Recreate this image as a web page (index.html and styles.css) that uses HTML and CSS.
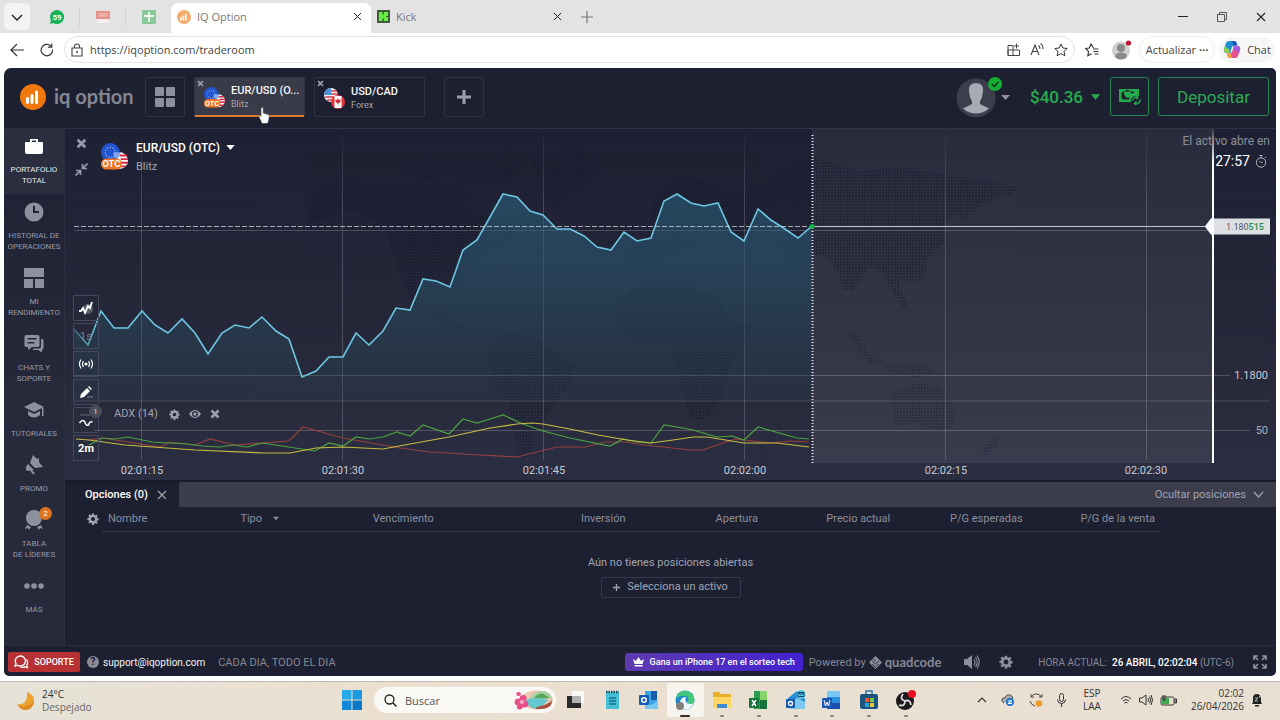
FILE: index.html
```html
<!DOCTYPE html>
<html lang="es">
<head>
<meta charset="utf-8">
<title>IQ Option</title>
<link rel="stylesheet" href="styles.css">
</head>
<body>
<svg class="defs" aria-hidden="true">
  <symbol id="gear" viewBox="0 0 20 20"><path fill-rule="evenodd" fill="currentColor" d="M8.4 1h3.2l.4 2.5 1.5.6 2.1-1.5 2.2 2.2-1.5 2.1.6 1.5 2.5.4v3.2l-2.5.4-.6 1.5 1.5 2.1-2.2 2.2-2.1-1.5-1.5.6-.4 2.5H8.4L8 16.8l-1.500-.6-2.100 1.500-2.200-2.200 1.500-2.100-.6-1.500L.6 11.500V8.400l2.500-.4.6-1.500-1.500-2.100 2.200-2.200 2.100 1.500L8 3.200zM10 6.600a3.400 3.400 0 1 0 0 6.800 3.400 3.400 0 0 0 0-6.800z"/></symbol>
  <symbol id="cross" viewBox="0 0 10 10"><path d="M1.500 1.500l7 7m0-7l-7 7" stroke="currentColor" stroke-width="2.600" fill="none"/></symbol>
  <symbol id="thin-cross" viewBox="0 0 10 10"><path d="M1 1l8 8m0-8l-8 8" stroke="currentColor" fill="none" stroke-width="1.100"/></symbol>
  <symbol id="caret" viewBox="0 0 10 6"><path d="M0 0h10L5 6z" fill="currentColor"/></symbol>
  <symbol id="bars" viewBox="0 0 26 26"><circle cx="13" cy="13" r="13" fill="#f0780d"/><path d="M7.500 18.500v-4M12 18.500v-7M16.500 18.500V8" stroke="#fff" stroke-width="3" stroke-linecap="round"/></symbol>
  <symbol id="pair-otc" viewBox="0 0 26 26">
    <circle cx="18" cy="17" r="8" fill="#f4f1f5"/><path d="M18 12h7M19 15.500h7M19 19h7M18 22.500h6" stroke="#d62d48" stroke-width="1.800"/>
    <circle cx="9" cy="9" r="9" fill="#2354cf"/><circle cx="9" cy="9" r="4.800" fill="none" stroke="#a9bce9" stroke-width="1.300" stroke-dasharray="1 1.700"/><path d="M12 9h6a9 9 0 0 1-2 6l-4-1z" fill="#7fa6ed"/>
    <rect y="15" width="20" height="10.500" rx="5" fill="#ee7424"/><text x="10" y="23.300" text-anchor="middle" class="otc">OTC</text>
  </symbol>
</svg>

<header class="tabs">
  <button class="tab-menu" aria-label="Lista de pestañas"><svg width="12" height="12" viewBox="0 0 12 12"><path d="M1 4l5 5 5-5" fill="none" stroke="#222" stroke-width="1.400"/></svg></button>
  <button class="pin" aria-label="WhatsApp"><svg width="14" height="14" viewBox="0 0 14 14"><path d="M7 0a7 7 0 1 1-3.500 13L0 14l1-3.500A7 7 0 0 1 7 0z" fill="#15b257"/><text x="7" y="10" text-anchor="middle" class="badge-text">59</text></svg></button>
  <button class="pin" aria-label="Página fijada"><svg width="14" height="14" viewBox="0 0 14 14"><path d="M0 1h14v8H0z" fill="#e5938a"/><path d="M2 4h10M2 6h10" stroke="#f4c5c0"/><path d="M1 9h12v4H1z" fill="#f4eeee"/></svg></button>
  <button class="pin last" aria-label="Hoja de cálculo"><svg width="14" height="14" viewBox="0 0 14 14"><rect width="14" height="14" rx="1" fill="#8ac99a"/><path d="M7 2v10M2 6h10" stroke="#f0faf2" stroke-width="1.800"/></svg></button>
  <div class="tab active"><svg class="faded" width="14" height="14"><use href="#bars"/></svg><span>IQ Option</span><button aria-label="Cerrar pestaña"><svg width="9" height="9"><use href="#thin-cross"/></svg></button></div>
  <div class="tab"><svg width="13" height="13" viewBox="0 0 13 13"><path d="M0 0h13v13H0z" fill="#3f5c3a"/><path d="M2 2h3.500v2.500h1.500V2H11v4H9v1h2v4H7V8.500H5.500V11H2z" fill="#65ed43"/></svg><span>Kick</span><button aria-label="Cerrar pestaña"><svg width="9" height="9"><use href="#thin-cross"/></svg></button></div>
  <button class="new-tab" aria-label="Nueva pestaña"><svg width="12" height="12" viewBox="0 0 12 12"><path d="M6 0v12M0 6h12" stroke="#777" stroke-width="1.200"/></svg></button>
  <div class="window-buttons">
    <button aria-label="Minimizar"><svg width="10" height="10" viewBox="0 0 10 10"><path d="M0 4.500h10" stroke="#222"/></svg></button>
    <button aria-label="Restaurar"><svg width="10" height="10" viewBox="0 0 10 10"><path d="M.5 2.500h7v7h-7zM2.500 2V.5h7v7H8" fill="none" stroke="#555"/></svg></button>
    <button aria-label="Cerrar"><svg width="10" height="10"><use href="#thin-cross"/></svg></button>
  </div>
</header>

<div class="toolbar">
  <button aria-label="Atrás"><svg width="14" height="14" viewBox="0 0 14 14"><path d="M14 7H1m6-6L1 7l6 6" fill="none" stroke="#333" stroke-width="1.200"/></svg></button>
  <button aria-label="Actualizar"><svg width="14" height="14" viewBox="0 0 14 14"><path d="M12.500 6.500A5.700 5.700 0 1 1 10.800 3M11.800.5v3.700H8" fill="none" stroke="#333" stroke-width="1.200"/></svg></button>
  <form class="address">
    <svg width="12" height="14" viewBox="0 0 12 14"><path d="M1 5h10v8H1zM3.500 5V3.500a2.500 2.500 0 0 1 5 0V5" fill="none" stroke="#444" stroke-width="1.100"/><circle cx="6" cy="9" r="1" fill="#444"/></svg>
    <input aria-label="Dirección" value="https://iqoption.com/traderoom">
    <svg width="13" height="13" viewBox="0 0 13 13"><path d="M1 2.500h5v10H1zM6 7h6.500v5.500H1V7h5M9.500.5v5M7 3h5" fill="none" stroke="#444"/></svg>
    <svg width="14" height="13" viewBox="0 0 14 13"><path d="M1 12L5 2l4 10M2.500 8.500h5M8.500 2.500q1.800 1.500 1.300 3.500M10.500.5Q13.500 2.500 13 6" fill="none" stroke="#444" stroke-width="1.100"/></svg>
    <svg width="14" height="14" viewBox="0 0 14 14"><path d="M7 1l1.900 4 4.300.5-3.200 3 .9 4.300L7 10.600l-3.900 2.200.9-4.300-3.200-3L5.100 5z" fill="none" stroke="#333"/></svg>
  </form>
  <button class="fav" aria-label="Favoritos"><svg width="14" height="14" viewBox="0 0 14 14"><path d="M8.500 5L6 1 4.300 5 .7 5.500l2.800 3-.7 4.300 3.700-2.100M8 6h5.500M8.500 8.500h5M9.500 11h4" fill="none" stroke="#333" stroke-width="1.100"/></svg></button>
  <button class="profile" aria-label="Perfil"><svg width="20" height="20" viewBox="0 0 20 20"><circle cx="9" cy="10.500" r="9" fill="#cfcfcf"/><circle cx="9" cy="8" r="4" fill="#8a8a8a"/><ellipse cx="9" cy="16" rx="6" ry="3.500" fill="#8a8a8a"/><circle cx="16.500" cy="3" r="2.600" fill="#bc1431"/></svg></button>
  <button class="update">Actualizar&nbsp; <b>···</b></button>
  <button class="copilot"><svg width="18" height="17" viewBox="0 0 18 17"><path d="M6 0h5q2 0 2.600 2l.8 2.500h-4L8 12H4Q0 12 1 8l2-6q.7-2 3-2z" fill="#1f91cf"/><path d="M11 0q2 0 2.600 2l.8 2.500h-4L9 0z" fill="#2350b8"/><path d="M1 8l1-3 5 4-1 3H4Q0 12 1 8z" fill="#8ccb52"/><path d="M12 17H7q-2 0-2.600-2l-.8-2.500h4L10 5h4q4 0 3 4l-2 6q-.7 2-3 2z" fill="#e5528b"/><path d="M9 17H7q-2 0-2.600-2L3.600 12.500h4z" fill="#f3a33b"/><path d="M10 5h4q4 0 3 4l-1 3-6-4z" fill="#a95cdb"/><path d="M9 5.500L7.500 11.500h1.500L10.500 5.500z" fill="#f6f6f6"/></svg>Chat</button>
</div>

<main class="app">
  <header class="app-head">
    <div class="logo"><svg width="26" height="26"><use href="#bars"/></svg><span>iq option</span></div>
    <button class="square grid-btn" aria-label="Diseño"><svg width="20" height="20" viewBox="0 0 20 20" fill="#8c8f9f"><rect width="9" height="9" rx="1"/><rect x="11" width="9" height="9" rx="1"/><rect y="11" width="9" height="9" rx="1"/><rect x="11" y="11" width="9" height="9" rx="1"/></svg></button>
    <button class="asset selected"><svg class="x" width="7" height="7"><use href="#cross"/></svg><svg class="flag" width="21" height="21"><use href="#pair-otc"/></svg><span class="names"><b>EUR/USD (O...</b><small>Blitz</small></span>
      <svg class="pointer" width="12" height="17" viewBox="0 0 12 17"><path d="M3 1q1.500-1.500 2.300.5V6l5 1.500q1.500.5 1 2.500l-1 5-1 1.500H4L1 10q-.8-1.800.5-2L3 9.500z" fill="#fff" stroke="#333" stroke-width=".6"/></svg></button>
    <button class="asset"><svg class="x" width="7" height="7"><use href="#cross"/></svg><svg class="flag" width="21" height="21" viewBox="0 0 21 21"><circle cx="7" cy="7" r="7" fill="#f2f0f3"/><path d="M5 3h8M6 6h8M1 9h12M3 12h8" stroke="#d23c50" stroke-width="1.500"/><path d="M0 7a7 7 0 0 1 7-7v7z" fill="#4b91da"/><circle cx="14" cy="14" r="7" fill="#e3343c"/><path d="M10.500 8h7v12h-7z" fill="#fff"/><path d="M14 10l1 2 2-.5-1 3-1.500.5v1.500h-1V15L12 14.500l-1-3 2 .5z" fill="#d92934"/></svg><span class="names"><b>USD/CAD</b><small>Forex</small></span></button>
    <button class="square add" aria-label="Añadir activo"><svg width="14" height="14" viewBox="0 0 14 14"><path d="M7 0v14M0 7h14" stroke="#9c9fae" stroke-width="3"/></svg></button>
    <button class="avatar" aria-label="Cuenta"><svg width="54" height="42" viewBox="0 0 54 42"><circle cx="20" cy="22" r="19.500" fill="#3c3e4d"/><path d="M20 7q8 0 7 9l-1 5q-1 3-2 4v3l9 4.500A19.500 19.500 0 0 1 7 32.500L16 28v-3q-1-1-2-4l-1-5q-1-9 7-9z" fill="#a8aab4"/><circle cx="39" cy="8" r="7" fill="#14ae36"/><path d="M36 8l2.300 2.300L42.500 6" fill="none" stroke="#10331c" stroke-width="1.600"/><path d="M45 19h9l-4.500 5z" fill="#8f929e"/></svg></button>
    <button class="balance">$40.36 <svg width="9" height="6"><use href="#caret"/></svg></button>
    <button class="green cash" aria-label="Recargar"><svg width="23" height="17" viewBox="0 0 23 17"><path fill-rule="evenodd" d="M1 1h20v7q-5-1-8 3v3H1zM5 3.500q0 1-1.500 1v6q1.500 0 1.500 1h6l1-3h-4a3.500 3.500 0 1 1 5-3l4-1q-1 0-1-1z" fill="#25aa4c"/><circle cx="10" cy="7" r="2.800" fill="#25aa4c"/><path d="M14.500 12.500a4 4 0 0 1 5-3.300M18 7.500l2 1.700-2 2M22 11.500a4 4 0 0 1-5 4.200M18.500 17l-2-1.500 2-2" fill="none" stroke="#25aa4c" stroke-width="1.400"/></svg></button>
    <button class="green deposit">Depositar</button>
  </header>

  <div class="app-body">
    <nav class="side">
      <a href="#" class="on"><svg viewBox="0 0 20 20"><path d="M6 3h8v3h-2V4.500H8V6H6zM2 6h16q1 0 1 1v9q0 2-2 2H3q-2 0-2-2V7q0-1 1-1z"/></svg>PORTAFOLIO<br>TOTAL</a>
      <a href="#"><svg viewBox="0 0 20 20"><path fill-rule="evenodd" d="M10 .5a9.500 9.500 0 1 1 0 19 9.500 9.500 0 0 1 0-19zM9 4v7h6V9h-4V4z"/></svg>HISTORIAL DE<br>OPERACIONES</a>
      <a href="#"><svg viewBox="0 0 20 20"><path d="M0 0h20v9H0zM0 11h9v9H0zM11 11h9v9h-9z"/></svg>MI<br>RENDIMIENTO</a>
      <a href="#"><svg viewBox="0 0 20 20"><path fill-rule="evenodd" d="M2 1h12q1.500 0 1.500 1.500v9q0 1.500-1.500 1.500H8l-4 3v-3H2Q.5 13 .5 11.500v-9Q.5 1 2 1zM3.500 4v1.500h9V4zm0 4v1.500h7V8zM17 5h1q1.500 0 1.500 1.500V14q0 1.500-1.500 1.500v3L14 16H9v-1.500h6q2 0 2-2z"/></svg>CHATS Y<br>SOPORTE</a>
      <a href="#"><svg viewBox="0 0 20 20"><path d="M10 2l10 5-10 5L0 7zM4 11l6 3 6-3v4q-6 5-12 0zM18 8h1.500v8H18z"/></svg>TUTORIALES</a>
      <a href="#"><svg viewBox="0 0 20 20"><path d="M9 0l4 4 2-1v4l4 5-8 1-5-5zM4 9l6 6-2 .5L11 18l-2 1.500-3-4-3 .5Q0 13 4 9z"/></svg>PROMO</a>
      <a href="#" class="leaders"><svg viewBox="0 0 20 20"><circle cx="10" cy="8" r="8"/><path d="M3 15l4 2-2 3-1-2-3 1zM17 15l-4 2 2 3 1-2 3 1z"/></svg><em>2</em>TABLA<br>DE LÍDERES</a>
      <a href="#"><svg viewBox="0 0 20 20"><circle cx="3" cy="10" r="2.800"/><circle cx="10" cy="10" r="2.800"/><circle cx="17" cy="10" r="2.800"/></svg>MÁS</a>
    </nav>

    <div class="work">
      <section class="chart">
        <svg class="plot" viewBox="65 129 1211 351" preserveAspectRatio="none">
          <defs>
            <linearGradient id="area" x1="0" y1="194" x2="0" y2="401" gradientUnits="userSpaceOnUse"><stop offset="0" stop-color="#2a6380" stop-opacity=".58"/><stop offset=".4" stop-color="#2b5a74" stop-opacity=".5"/><stop offset="1" stop-color="#284552" stop-opacity=".22"/></linearGradient>
            <linearGradient id="fade" x1="73" x2="112" y1="0" y2="0" gradientUnits="userSpaceOnUse"><stop stop-color="#5fb9d6" stop-opacity=".35"/><stop offset=".6" stop-color="#6cc6e2"/></linearGradient>
            <linearGradient id="ahead" x1="0" y1="0" x2="0" y2="1"><stop offset="0" stop-color="#fff" stop-opacity=".05"/><stop offset="1" stop-color="#fff" stop-opacity=".07"/></linearGradient>
            <linearGradient id="time-line" x1="0" y1="129" x2="0" y2="463" gradientUnits="userSpaceOnUse"><stop stop-color="#fff" stop-opacity=".1"/><stop offset=".1" stop-color="#fff"/></linearGradient>
            <linearGradient id="grid-line" x1="0" y1="135" x2="0" y2="200" gradientUnits="userSpaceOnUse"><stop stop-color="#fff" stop-opacity=".03"/><stop offset="1" stop-color="#fff" stop-opacity=".18"/></linearGradient>
            <pattern id="dots" width="3" height="3" patternUnits="userSpaceOnUse"><rect width="2" height="2" fill="#15172a"/></pattern>
          </defs>
          <rect x="812" y="129" width="401" height="334" fill="url(#ahead)"/>
          <g fill="url(#dots)" opacity=".42">
            <path d="M315 192l14-9 25-1 40 6 30-4 20 5 18-4 12 9-8 12 18 7 22 4 12 14-14 12-12 4-20 15-10 14-4 14-14-4-20 4-2 12 10 2 12 5 14 16 12 6-8 2-26-16-22-14-16-30-6-24-8-24-26-14-26 4-18 8-8-4z"/>
            <path d="M398 164l30-8 30 8 36-10 26 10-10 14-30 8-26-10-30 4-24-6z"/>
            <path d="M532 158l44-8 30 6-12 18-20 18-14 16-14-10-8-20z"/>
            <path d="M492 338l20-6 22 4 22 18 20 10-6 20-14 16-12 20-10 14-2 22-12 2-6-20-4-32-14-20-8-22z"/>
            <path d="M632 270l-4-18 14-12 10-14-2-20 14-16 22-14 26 8 10 10 26-6 16-6 18-14 34-10 40 12 52-2 46 8 50 8 18 5-22 8-20 8-14 16-10-8-10 8-2 22-16 16-6 20-14 4-10-8 2 16 8 12-4 6-14-22-8-16-12-4-18 24-8-2-12-28-18-8-12 16-22-24-22-4-26-6-20-8-12 12z"/>
            <path d="M632 288l22-8 34 4 28 14 20 26 18 2-12 22-12 18-6 28-16 24-16 2-10-26-4-28-10-22-30 2-22-18 0-20z"/>
            <g opacity=".6"><path d="M846 330l14 6 12 20 16 8 30 0 24 10-30 4-44-16z"/><path d="M890 396l16-10 16-4 18 6 16 20-4 20-16 4-18-10-22 4z"/><path d="M980 448l18-14 4 4-16 18z"/></g>
          </g>
          <g stroke="#fff" stroke-opacity=".18" fill="none">
            <path stroke="url(#grid-line)" stroke-opacity="1" d="M141.500 135v325M342.500 135v325M543.500 135v325M744.500 135v325M945.500 135v325M1146.500 135v325"/>
            <path d="M74 230.500h1140M74 375.500h1156M94 430.500h1156" stroke-opacity=".2"/><path d="M74 401h1196" stroke-opacity=".08" stroke-width="2"/>
          </g>
          <path d="M73 328l15 17 13-34 13 17h14l14-17 13 14 13 8 14-14 13 14 13 21 14-21 13-8 14 3 13-11 14 14 13 8 13 38 14-6 13-14h14l13-24 13 12 14-14 13-23 14 2 13-31 13 2 14 6 13-37 14-10 13-23 13-23 14 3 13 14 13 4 14 14h13l14 7 13 11 14 3 13-18 13 9 14-3 13-37 13-7 14 9 13 3 14-3 13 29 13 9 14-32 13 11 14 9 13 9 14-12V401H73z" fill="url(#area)"/>
          <path d="M73 328l15 17 13-34 13 17h14l14-17 13 14 13 8 14-14 13 14 13 21 14-21 13-8 14 3 13-11 14 14 13 8 13 38 14-6 13-14h14l13-24 13 12 14-14 13-23 14 2 13-31 13 2 14 6 13-37 14-10 13-23 13-23 14 3 13 14 13 4 14 14h13l14 7 13 11 14 3 13-18 13 9 14-3 13-37 13-7 14 9 13 3 14-3 13 29 13 9 14-32 13 11 14 9 13 9 14-12" fill="none" stroke="url(#fade)" stroke-width="1.600"/>
          <g fill="none" stroke-width="1.200">
            <path stroke="#94403f" d="M89 440l13-2 13 2 45 7 10-5 25 3 15-6 25 6 27-2 27-2 14-14 40 11 57 10 30 4 50 3 37 2 40-10h28l20-5h20l20 3 45 5h13l17-6 15-5 35 4 20-2 19 1"/>
            <path stroke="#4da13f" d="M89 445l13-7 13 1 13-2 24 5 18 1 17 1 15 2 18 1 13-2 14 2 15-4 53 8 14-8 14 3 13-9 13 2 14-2 14-5 13 4 13-11 26 9 14-15 14 4 13-4 13-4 20 9 20 7 27 7 40 8 13-7 14 3 14 1 13-18 13 2 16 3 24 7 15-1 12 4 14-13 39 11 12 1"/>
            <path stroke="#c5bd42" d="M76 439l13 1 36 5 70 5 70 3h25l26-5 27-1 40 2 27-5 39-7 41-9 27-4 15-1 11 1 27 5 28 6 29 5 24 3 22-3 20-3h14l37 6h33l32 4"/>
          </g>
          <path d="M74 226.500h738" stroke="#d5d8df" stroke-opacity=".75" stroke-dasharray="5 2"/><path d="M812 226.500h395" stroke="#c7c9d0"/>
          <path d="M812.500 135v328" stroke="#e5e7ef" stroke-width="2" stroke-dasharray="1 2"/>
          <circle cx="812" cy="226.500" r="2.500" fill="#16b14a"/>
          <rect x="1212" y="129" width="2" height="334" fill="url(#time-line)"/>
          <path d="M1205 226.500l6-8h59v16h-59z" fill="#dedfe3"/><path d="M1205 226.500l6-8h3v16h-3z" fill="#f8f9ff"/>
          <text x="1226" y="230" class="quote">1.180<tspan>515</tspan></text>
          <g class="axis" text-anchor="middle"><text x="142" y="474">02:01:15</text><text x="343" y="474">02:01:30</text><text x="544" y="474">02:01:45</text><text x="745" y="474">02:02:00</text><text x="946" y="474">02:02:15</text><text x="1146" y="474">02:02:30</text></g>
          <g class="axis" text-anchor="end"><text x="1268" y="379">1.1800</text><text x="1268" y="434" class="dim">50</text></g>
        </svg>
        <div class="chart-title">
          <div class="view-buttons"><button aria-label="Cerrar gráfico"><svg width="11" height="11"><use href="#cross"/></svg></button><button aria-label="Reducir"><svg width="13" height="13" viewBox="0 0 13 13"><path d="M7.500 1v4.500H12M1 7.500h4.500V12M12.500.5l-5 5M.5 12.500l5-5" fill="none" stroke="#9799a8" stroke-width="1.700"/></svg></button></div>
          <svg width="27" height="27"><use href="#pair-otc"/></svg>
          <div><button class="pair">EUR/USD (OTC) <svg width="9" height="5"><use href="#caret"/></svg></button><p>Blitz</p></div>
        </div>
        <div class="opens"><p>El activo abre en</p><p class="clock">27:57 <svg width="12" height="13" viewBox="0 0 12 13"><circle cx="6" cy="7.500" r="4.700" fill="none" stroke="#b3b6c2"/><path d="M4.500.5h3M6 .5v2M10 3l1-1M6 7.500L4.500 6M6 7.500h1.500" stroke="#b3b6c2" fill="none"/></svg></p></div>
        <div class="tools">
          <button aria-label="Tipo de gráfico"><svg viewBox="0 0 16 16"><circle cx="10" cy="9" r="5" fill="#595d6a"/><path d="M1 11h2l2-3 2 5 3-7 2 2 2-6" fill="none" stroke="#fff" stroke-width="1.800"/></svg></button>
          <button class="muted">1s</button>
          <button aria-label="Señales"><svg viewBox="0 0 16 16"><circle cx="8" cy="8" r="1.600" fill="#fff"/><path d="M5.500 5Q3.500 8 5.500 11M3 3.500Q0 8 3 12.500M10.500 5q2 3 0 6M13 3.500q3 4.500 0 9" fill="none" stroke="#fff" stroke-width="1.200"/></svg></button>
          <button aria-label="Dibujar"><svg viewBox="0 0 16 16"><path d="M3 10l6-6 3 3-6 6-4 1zM10 3l1-1 3 3-1 1z" fill="#fff"/><path d="M9 13h6" stroke="#7e818d"/></svg></button>
          <button aria-label="Indicadores"><svg viewBox="0 0 16 16"><path d="M2 3h10" stroke="#626574"/><path d="M1.500 11q2.500-4 5-1.500 2 5 4 3.500 1-4 4-3" fill="none" stroke="#fff" stroke-width="1.500"/></svg><em>1</em></button>
          <button><b>2m</b></button>
        </div>
        <div class="indicator"><span>ADX (14)</span><button aria-label="Ajustes"><svg width="11" height="11"><use href="#gear"/></svg></button><button aria-label="Mostrar"><svg width="12" height="8" viewBox="0 0 12 8"><path fill-rule="evenodd" d="M0 4q6-8 12 0-6 8-12 0zm6-3a3 3 0 1 0 0 6 3 3 0 0 0 0-6z" fill="currentColor"/><circle cx="6" cy="4" r="1.700" fill="currentColor"/></svg></button><button aria-label="Quitar"><svg width="10" height="10"><use href="#cross"/></svg></button></div>
      </section>

      <section class="positions">
        <div class="pos-head"><div class="pos-tab">Opciones (0)<button aria-label="Cerrar"><svg width="10" height="10"><use href="#thin-cross"/></svg></button></div><button class="hide">Ocultar posiciones <svg width="11" height="7" viewBox="0 0 11 7"><path d="M1 1l4.500 5L10 1" fill="none" stroke="currentColor" stroke-width="1.300"/></svg></button></div>
        <div class="table-row"><button aria-label="Columnas"><svg width="12" height="12"><use href="#gear"/></svg></button>
          <table><thead><tr><th>Nombre</th><th>Tipo <svg width="6" height="5"><use href="#caret"/></svg></th><th>Vencimiento</th><th>Inversión</th><th>Apertura</th><th>Precio actual</th><th>P/G esperadas</th><th>P/G de la venta</th></tr></thead></table></div>
        <div class="empty"><p>Aún no tienes posiciones abiertas</p><button><svg width="7" height="7" viewBox="0 0 7 7"><path d="M3.500 0v7M0 3.500h7" stroke="currentColor" stroke-width="1.300"/></svg>Selecciona un activo</button></div>
      </section>
    </div>
  </div>

  <footer class="app-foot">
    <button class="support"><svg width="15" height="14" viewBox="0 0 15 14"><path d="M6.500 1a5 5 0 1 1-2.800 9.200L1 11l1-2.500A5 5 0 0 1 6.500 1z" fill="none" stroke="#fff" stroke-width="1.300"/><path d="M12.500 4.500q2 3 .3 5.700l.7 2.300-2.500-.7q-2 1-4.500 0" fill="none" stroke="#fff" stroke-width="1.300"/></svg>SOPORTE</button>
    <a class="mail" href="#"><span class="question">?</span>support@iqoption.com</a>
    <span class="hours">CADA DIA, TODO EL DIA</span>
    <button class="prize"><svg width="11" height="10" viewBox="0 0 11 10"><path d="M0 2l3 2 2.500-4L8 4l3-2-1.500 5h-8zM1.500 8h8v1.500h-8z" fill="#fff"/></svg>Gana un iPhone 17 en el sorteo tech</button>
    <span class="powered">Powered by <svg width="13" height="13" viewBox="0 0 13 13"><path d="M6.500 0L13 6.500 6.500 13 0 6.500z" fill="#8c8e99"/><path d="M3 5l3.500 3L10 5M3 8l3.500 3L10 8M4 3l3 2" stroke="#292b3c" fill="none" stroke-width=".9"/></svg><b>quadcode</b></span>
    <button class="foot-icon" aria-label="Sonido"><svg width="16" height="14" viewBox="0 0 16 14"><path d="M0 4h3l5-4v14l-5-4H0z" fill="#8c8e99"/><path d="M10 4q2 3 0 6M11.500 2q3.500 5 0 10M13 .5q4.500 6.500 0 13" fill="none" stroke="#8c8e99" stroke-width="1.100"/></svg></button>
    <button class="foot-icon gear" aria-label="Configuración"><svg width="14" height="14"><use href="#gear"/></svg></button>
    <span class="now">HORA ACTUAL:&nbsp; <b>26 ABRIL, 02:02:04</b> (UTC-6)</span>
    <button class="foot-icon full" aria-label="Pantalla completa"><svg width="14" height="14" viewBox="0 0 14 14"><path d="M1 5V1h4M9 1h4v4M13 9v4H9M5 13H1V9M1 1l4 4M13 1L9 5M13 13L9 9M1 13l4-4" stroke="#8c8e99" stroke-width="1.700" fill="none"/></svg></button>
  </footer>
</main>

<footer class="taskbar">
  <div class="weather"><svg width="18" height="18" viewBox="0 0 18 18"><path d="M10 0q8 3 7 10-1 7-8 8-6 0-9-6 11 2 10-12z" fill="#eda22f"/><path d="M17 8q0 8-8 10-5 0-8-5 11 4 16-5z" fill="#e08c25"/></svg><div>24°C<br><span>Despejado</span></div></div>
  <div class="launch">
    <button aria-label="Inicio"><svg width="20" height="20" viewBox="0 0 20 20"><path d="M0 0h9.500v9.500H0z" fill="#26a7e6"/><path d="M10.500 0H20v9.500h-9.500z" fill="#1b99e0"/><path d="M0 10.500h9.500V20H0z" fill="#1288d6"/><path d="M10.500 10.500H20V20h-9.500z" fill="#0878c9"/></svg></button>
    <label class="search"><svg width="13" height="13" viewBox="0 0 13 13"><circle cx="5.500" cy="5.500" r="4.500" fill="none" stroke="#222" stroke-width="1.300"/><path d="M9 9l3.500 3.500" stroke="#222" stroke-width="1.500"/></svg><input placeholder="Buscar" aria-label="Buscar"><svg width="40" height="20" viewBox="0 0 35 20" preserveAspectRatio="none"><ellipse cx="20" cy="10" rx="14" ry="9.500" fill="#eec7ae"/><path d="M14 8q4-8 12-7 7 2 7 8-12-2-19 2z" fill="#a9cfa0"/><path d="M18 7q5-5 8-3l5 4-13 1z" fill="#57a95e"/><path d="M10 10q8-4 20 0l-8 9q-10 0-12-9z" fill="#63c9cf"/><path d="M23 16q8-2 10-6 1 8-8 9h-6q0-2 4-3z" fill="#a85340"/><g fill="#e84c88"><circle cx="4" cy="12" r="3.500"/><circle cx="8" cy="8" r="3"/><circle cx="9" cy="14" r="3.500"/><circle cx="5" cy="17" r="2.500"/><circle cx="4" cy="4" r="2"/></g><circle cx="7" cy="12" r="2" fill="#f7a9c4"/></svg></label>
    <div class="apps">
      <button aria-label="Vista de tareas"><svg viewBox="0 0 20 20"><path d="M7 1h12v12H7z" fill="#faf9f7"/><path d="M2 6h14v12H2z" fill="#2a2a2c"/><path d="M7 6h9v7H7z" fill="#b5b3b1"/></svg></button>
      <button aria-label="Bloc de notas"><svg viewBox="0 0 20 20"><path d="M4 2h13v17H4z" fill="#47bfd6"/><path d="M7 8h7M7 11h7M7 14h7" stroke="#16708f" stroke-width="1.500"/><path d="M4 2h13" stroke="#114e66" stroke-width="2.500" stroke-dasharray="1.500 1"/></svg></button>
      <button aria-label="Outlook"><svg viewBox="0 0 20 20"><path d="M6 1h12v18H6z" fill="#39a7e5"/><path d="M12 1h6v9h-6z" fill="#185ba8"/><path d="M6 12l6 3 7-4v8H6z" fill="#76c6ef"/><rect y="5" width="10" height="10" rx="1" fill="#155daf"/><circle cx="5" cy="10" r="2.300" fill="none" stroke="#fff" stroke-width="1.500"/></svg></button>
      <button class="current" aria-label="Edge"><svg viewBox="0 0 20 20"><circle cx="10" cy="10" r="9.500" fill="#2187cf"/><path d="M1 8Q3 1 10 .5q9 1 9.500 10-1 5-7 3-1-2 1-4Q12 3 1 8z" fill="#45c77b"/><path d="M5 12q1-5 6-5-2 7 5 7l3-1q-4 8-11 6-3-2-3-7z" fill="#e9f7ff"/><circle cx="5" cy="16" r="4" fill="#837f7b"/></svg></button>
      <button class="open" aria-label="Explorador"><svg viewBox="0 0 20 20"><path d="M1 2h6l2 2h10v14H1z" fill="#e7ae2c"/><path d="M1 7h18v11H1z" fill="#ffd566"/><path d="M5 14h10v4H5z" fill="#398dd4"/></svg></button>
      <button class="open" aria-label="Excel"><svg viewBox="0 0 20 20"><path d="M5 1h13v18H5z" fill="#2a9d51"/><path d="M11 1h7v9h-7z" fill="#85d469"/><path d="M11 10h7v9h-7z" fill="#17723b"/><rect y="8" width="10" height="10" rx="1" fill="#14733b"/><path d="M3 10l4 6m0-6l-4 6" stroke="#fff" stroke-width="1.400"/></svg></button>
      <button class="open" aria-label="Correo"><svg viewBox="0 0 20 20"><path d="M2 8l9-7 8 8v10H4z" fill="#268bd8"/><path d="M4 13l7-5 8 4v7H4z" fill="#7fc9f1"/><rect y="9" width="9" height="9" rx="1" fill="#155daf"/><circle cx="4.500" cy="13.500" r="2" fill="none" stroke="#fff" stroke-width="1.300"/><circle cx="15" cy="4.500" r="4.500" fill="#5bc5e7"/><path d="M12 2.500h6v4h-6zl3 2 3-2" fill="none" stroke="#124567"/></svg></button>
      <button class="open" aria-label="Word"><svg viewBox="0 0 20 20"><path d="M5 1h13v18H5z" fill="#298de0"/><path d="M5 1h13v6H5z" fill="#79c7f4"/><path d="M5 13h13v6H5z" fill="#1b4ead"/><rect y="8" width="10" height="10" rx="1" fill="#1956b6"/><path d="M2 10l1.500 6L5 12l1.500 4L8 10" stroke="#fff" fill="none"/></svg></button>
      <button class="open" aria-label="Microsoft Store"><svg viewBox="0 0 20 20"><path d="M7 5V1h6v4" fill="none" stroke="#2678b0" stroke-width="1.500"/><rect x="1" y="4" width="18" height="15" rx="2" fill="#1a5481"/><path d="M6 8h4v4H6z" fill="#ef5333"/><path d="M11 8h4v4h-4z" fill="#7dc342"/><path d="M6 13h4v4H6z" fill="#27a4df"/><path d="M11 13h4v4h-4z" fill="#f8c330"/></svg></button>
      <button class="open" aria-label="OBS"><svg viewBox="0 0 20 20"><circle cx="9" cy="11" r="9" fill="#1d1a1d"/><path d="M9 11Q3 9 7 4M9 11q5-2 6 4M9 11q0 6-6 4" fill="none" stroke="#ddd" stroke-width="1.800"/><circle cx="16" cy="4" r="4" fill="#e60e20"/></svg></button>
    </div>
  </div>
  <div class="tray">
    <svg width="10" height="6" viewBox="0 0 10 6"><path d="M1 5l4-4 4 4" fill="none" stroke="#333" stroke-width="1.200"/></svg>
    <svg width="14" height="14" viewBox="0 0 14 14"><path d="M3 10Q0 9 1 6q1-2 3-1 1-4 5-3 3 1 3 4" fill="#aaa" stroke="#555"/><circle cx="9" cy="9" r="4" fill="#1c77ce"/><path d="M7 8h4L7 10.500h4" fill="none" stroke="#fff"/></svg>
    <svg width="14" height="14" viewBox="0 0 14 14"><path d="M12.500 4A6 6 0 0 0 2 4M2 1v3h3M1 8q1 4 5 5M13 1v3h-3" fill="none" stroke="#444"/><circle cx="10" cy="10.500" r="3.300" fill="#ed9d27"/></svg>
    <svg width="9" height="14" viewBox="0 0 9 14"><rect x="2.500" y=".5" width="4" height="8" rx="2" fill="none" stroke="#333"/><path d="M.5 6.500q0 4 4 4t4-4M4.500 10.500V14" fill="none" stroke="#333"/></svg>
    <div class="lang">ESP<br>LAA</div>
    <svg width="12" height="10" viewBox="0 0 12 10"><path d="M1 4q5-5 10 0M3 6q3-3 6 0M4.500 8q1.500-1.500 3 0" fill="none" stroke="#333"/></svg>
    <svg width="14" height="12" viewBox="0 0 14 12"><path d="M.5 4H3l4-3v10L3 8H.5zM9 4q1 2 0 4M10.500 2.500q2.500 3.500 0 7M12 1q3 5 0 10" fill="none" stroke="#333"/></svg>
    <svg width="17" height="13" viewBox="0 0 17 13"><rect x="1" y="3" width="13" height="8" rx="1.500" fill="none" stroke="#333"/><path d="M2 4h7v6H2z" fill="#42a550"/><path d="M15 5h1.500v4H15zM3 1v5h2V1" stroke="#333" fill="none"/></svg>
    <div class="date">02:02<br>26/04/2026</div>
    <svg width="12" height="14" viewBox="0 0 12 14"><path d="M1 11l1-2V5q0-4 4-4 3 0 4 3v5l1 2zM4 12h4v1.500H4z" fill="#222"/><path d="M4 5h3L4 8h3M8 1h3L8 4h3" stroke="#eee" fill="none" stroke-width=".7"/></svg>
  </div>
</footer>
</body>
</html>
```

FILE: styles.css
```css
* { box-sizing: border-box; }
body { margin: 0; min-height: 100vh; display: flex; flex-direction: column; background: #fff; font-family: Roboto, "Liberation Sans", sans-serif; font-size: 11px; color: #a0a3b1; }
button { font: inherit; color: inherit; background: none; border: 0; padding: 0; display: flex; align-items: center; justify-content: center; flex: none; }
input { font: inherit; color: inherit; border: 0; padding: 0; background: none; min-width: 0; }
a { color: inherit; text-decoration: none; }
p { margin: 0; }
em { font-style: normal; }
svg { flex: none; }
.defs { display: none; }
.otc { font: bold 9px Roboto, sans-serif; fill: #fff; }

/* Browser frame */
.tabs { height: 33px; display: flex; align-items: center; background: #e3e3e3; color: #777; font-family: "Open Sans", sans-serif; }
.tab-menu { width: 26px; height: 27px; margin: 0 4px 0 4px; background: #f3f3f3; border-radius: 6px; }
.pin { width: 46px; height: 18px; border-right: 1px solid #cfcfcf; }
.pin.last { width: 45px; border: 0; }
.badge-text { font: bold 8px Roboto, sans-serif; fill: #fff; }
.tab { width: 200px; height: 30px; margin-top: 3px; padding: 0 9px 3px 6px; display: flex; align-items: center; gap: 6px; }
.tab.active { background: #fff; border-radius: 7px 7px 0 0; }
.tab span { flex: 1; }
.tab button { color: #222; }
.faded { opacity: .6; }
.new-tab { margin-left: 10px; }
.window-buttons { display: flex; gap: 29px; margin-left: auto; padding-right: 14px; color: #222; }
.toolbar { height: 35px; display: flex; align-items: center; background: #fff; color: #444; font-family: "Open Sans", sans-serif; padding: 0 5px 2px 10px; gap: 16px; }
.address { flex: 1; height: 27px; display: flex; align-items: center; gap: 10px; padding: 0 6px; margin-left: -6px; border: 1px solid #e3e3e3; border-radius: 14px; }
.address input { flex: 1; margin-left: -3px; }
.fav { margin-left: -6px; }
.profile { margin-left: -3px; }
.update { margin-left: -9px; width: 76px; height: 27px; border: 1px solid #eee; border-radius: 14px; }
.copilot { margin-left: -12px; width: 56px; height: 26px; border-radius: 13px; background: #f6f6f6; gap: 6px; }

/* Trading room */
.app { flex: 1; display: flex; flex-direction: column; margin: 0 4px; border-radius: 7px 5px 5px 5px; background: #1d2031; overflow: hidden; }
.app-head { height: 61px; display: flex; align-items: center; border-bottom: 1px solid #303345; padding: 0 7px 3px 16px; }
.logo { width: 125px; display: flex; align-items: center; gap: 8px; color: #858894; font: bold 20px Lato, sans-serif; white-space: nowrap; }
.logo span { padding-bottom: 2px; }
.square { width: 40px; height: 40px; border: 1px solid #303344; border-radius: 2px; }
.asset { position: relative; width: 111px; height: 40px; margin-left: 9px; padding: 3px 0 0 9px; justify-content: flex-start; border: 1px solid #303344; border-radius: 2px; text-align: left; }
.asset.selected { background: #393b49; border-bottom: 2px solid #e17a2b; }
.x { position: absolute; left: 2px; top: 2px; color: #9799a5; }
.names { margin-left: 6px; line-height: 14px; }
.names b, .names small { display: block; white-space: nowrap; }
.names b { color: #f4f5f8; font-weight: 500; }
.names small { font-size: 9px; line-height: 13px; }
.pointer { position: absolute; left: 63px; top: 29px; z-index: 2; }
.add { margin-left: 19px; }
.avatar { margin-left: auto; }
.balance { width: 70px; margin: 0 10px 0 20px; gap: 8px; color: #27ae4e; font-size: 17px; font-weight: 500; }
.green { height: 39px; border: 1px solid #278653; border-radius: 3px; color: #2da854; }
.cash { width: 39px; }
.deposit { width: 111px; margin-left: 9px; font-size: 17px; }
.app-body { flex: 1; display: flex; min-height: 0; }
.side { width: 61px; background: linear-gradient(#1f2234, #272a3a 60%); border-right: 1px solid #2c2f40; overflow: hidden; }
.side a { display: flex; flex-direction: column; align-items: center; padding: 8px 0; text-align: center; font-size: 8px; line-height: 11px; white-space: nowrap; color: #9799a6; fill: #8d909d; position: relative; }
.side a svg { width: 20px; height: 20px; margin-bottom: 8px; }
.side a.on { background: #2b2e3f; color: #e6e7ec; fill: #fff; padding-top: 7px; }
.side a:nth-child(n+6) { padding-bottom: 8px; }
.side em { position: absolute; left: 35px; top: 5px; width: 13px; height: 13px; border-radius: 50%; background: #dc7320; color: #fff; line-height: 13px; }
.work { flex: 1; display: flex; flex-direction: column; min-width: 0; }

/* Chart */
.chart { position: relative; flex: 1; min-height: 0; background: linear-gradient(#1e2133, #292b3d 80%, #2b2e41); }
.plot { position: absolute; width: 100%; height: 100%; }
.axis { font-size: 11px; fill: #c8cad4; }
.axis .dim { fill: #a9abb7; }
.quote { font-size: 9px; fill: #555965; }
.quote tspan { fill: #24913d; font-weight: 500; }
.chart-title { position: absolute; left: 9px; top: 7px; display: flex; gap: 12px; align-items: center; }
.view-buttons { display: flex; flex-direction: column; gap: 14px; color: #9799a8; width: 14px; align-items: center; padding-top: 2px; }
.chart-title > svg { margin-left: 1px; }
.pair { color: #fff; font-size: 12px; font-weight: 500; line-height: 20px; gap: 6px; margin-left: -4px; }
.chart-title p { margin-left: -4px; line-height: 17px; }
.opens { position: absolute; right: 6px; top: 4px; text-align: right; line-height: 16px; font-size: 12px; color: #8b8e9a; }
.clock { display: flex; justify-content: flex-end; align-items: center; gap: 5px; padding-right: 3px; color: #fff; font-size: 14px; line-height: 24px; }
.tools { position: absolute; left: 8px; bottom: 19px; display: flex; flex-direction: column; gap: 2px; }
.tools button { position: relative; width: 26px; height: 26px; border: 1px solid #45485a; border-radius: 1px; color: #fff; }
.tools svg { width: 16px; height: 16px; }
.tools .muted { color: #70838f; }
.tools em { position: absolute; right: -4px; top: -3px; width: 13px; height: 13px; border-radius: 50%; background: #494c5b; color: #ddd; font-size: 8px; line-height: 13px; }
.indicator { position: absolute; left: 49px; bottom: 58px; display: flex; align-items: center; gap: 9px; line-height: 16px; color: #9ea1ad; }
.indicator span { margin-right: 2px; }

/* Open positions */
.positions { height: 165px; border-top: 2px solid #1a1c2c; background: #1d2031; }
.pos-head { height: 25px; display: flex; justify-content: space-between; background: #3b3d4c; }
.pos-tab { display: flex; align-items: center; gap: 9px; padding: 0 12px 0 20px; background: #1d2031; color: #fff; font-weight: 500; }
.pos-tab button { color: #aaa; }
.hide { gap: 7px; padding-right: 12px; }
.table-row { display: flex; align-items: center; gap: 3px; margin: 0 115px 0 22px; }
.table-row button { width: 12px; }
table { width: 100%; table-layout: fixed; border-collapse: collapse; border-bottom: 1px solid #35384a; }
th { height: 24px; padding: 0 6px; font-weight: 400; text-align: left; white-space: nowrap; color: #8b8e9c; }
th:nth-child(n+4) { text-align: right; }
th svg { margin: 0 0 1px 8px; }
.empty { display: flex; flex-direction: column; align-items: center; padding-top: 23px; gap: 6px; line-height: 16px; }
.empty button { width: 140px; height: 21px; gap: 7px; border: 1px solid #35384a; border-radius: 2px; }

/* Status line */
.app-foot { height: 31px; display: flex; align-items: center; border-top: 1px solid #2b2e3f; padding: 2px 9px 0 4px; color: #858894; white-space: nowrap; }
.support { width: 72px; height: 20px; gap: 5px; background: #b83132; color: #fff; border-radius: 2px; font-size: 9px; font-weight: 500; }
.mail { display: flex; align-items: center; gap: 4px; margin: 0 13px 0 7px; color: #f2f3f6; font-size: 10px; }
.question { width: 12px; height: 12px; border-radius: 50%; background: #898b96; color: #1d2031; font-weight: bold; line-height: 12px; text-align: center; }
.prize { margin-left: auto; width: 178px; height: 18px; gap: 6px; background: linear-gradient(90deg, #5e3ab0, #4122d1); border-radius: 3px; color: #fff; font-size: 9px; font-weight: 500; }
.powered { display: flex; align-items: center; gap: 3px; margin-left: 6px; }
.powered b { font: bold 13px Lato, sans-serif; }
.foot-icon { margin-left: 23px; color: #8c8e99; }
.foot-icon.gear { margin-left: 19px; }
.now { margin-left: 25px; font-size: 10px; }
.now b { color: #fff; font-weight: 500; }
.foot-icon.full { margin-left: 19px; }

/* Desktop bar */
.taskbar { height: 39px; margin-top: 5px; display: flex; align-items: center; background: linear-gradient(90deg, #e6e2d7, #ebe0d0 30%, #e8dfd3); border-top: 1px solid #bcb9b3; color: #333; font: 10px/13px "Open Sans", sans-serif; }
.weather { flex: 1; display: flex; align-items: center; gap: 7px; padding-left: 17px; }
.weather span { color: #666; }
.launch { display: flex; align-items: center; padding: 0 14px 2px 0; height: 38px; }
.search { width: 182px; height: 26px; margin: 0 1px 0 12px; padding: 0 2px 0 10px; display: flex; align-items: center; gap: 8px; background: #faf8f4; border-radius: 13px; }
.search input { flex: 1; font-size: 11px; }
.search input::placeholder { color: #555; opacity: 1; }
.apps { width: 367px; display: flex; }
.apps button { flex: 1; height: 34px; position: relative; border-radius: 3px; }
.apps svg { width: 20px; height: 20px; }
.apps .current { background: #f7f3ed; }
.apps .open::after, .apps .current::after { content: ""; position: absolute; bottom: 0; width: 4px; height: 2px; border-radius: 1px; background: #85817c; }
.apps .current::after { width: 10px; background: #342f2d; }
.tray { flex: 1; display: flex; align-items: center; justify-content: flex-end; gap: 14px; padding: 0 17px 2px 0; }
.tray > svg:nth-of-type(n+6) { margin-left: -7px; }
.lang { text-align: center; margin: 0 5px 0 3px; }
.date { text-align: right; }
```
